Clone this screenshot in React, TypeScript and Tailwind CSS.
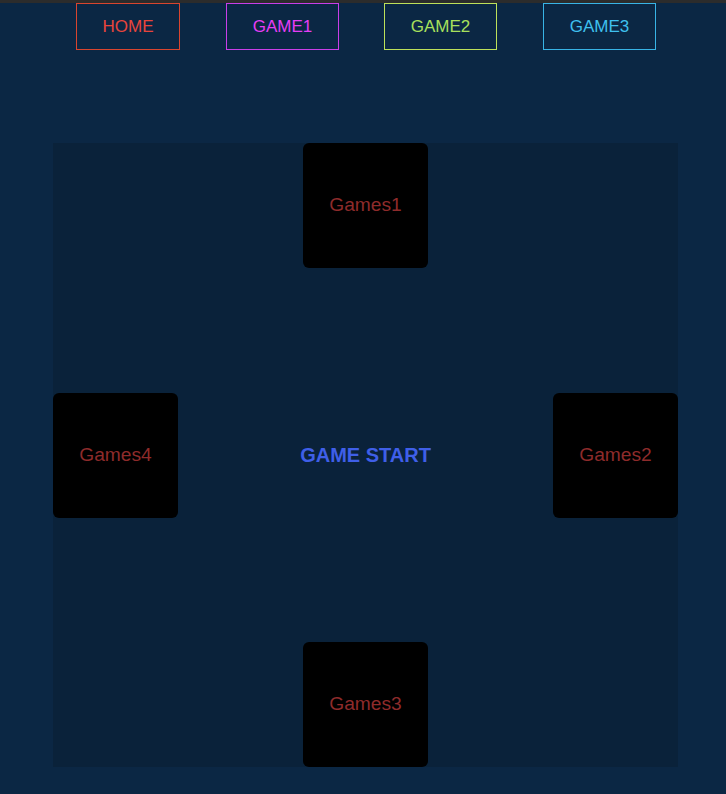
const links = [
  { label: "HOME", w: "w-[104px] ml-[76px]", text: "text-[#e8453c]", border: "border-[#d9452f]" },
  { label: "GAME1", w: "w-[113px] ml-[46px]", text: "text-[#e53df5]", border: "border-[#c93ee8]" },
  { label: "GAME2", w: "w-[113px] ml-[45px]", text: "text-[#a8e05c]", border: "border-[#bde05a]" },
  { label: "GAME3", w: "w-[113px] ml-[46px]", text: "text-[#3fc0ee]", border: "border-[#38b4e6]" },
];

function Card({ name }: { name: string }) {
  return (
    <div className="w-[125px] h-[125px] bg-black rounded-md flex items-center justify-center">
      <span className="text-[19.2px] text-[#8e2b2b]">{name}</span>
    </div>
  );
}

export default function App() {
  return (
    <div
      className="w-[726px] h-[794px] bg-[#0b2744] border-t-[3px] border-[#2c2c2c] overflow-hidden"
      style={{ fontFamily: '"Liberation Sans", Arial, sans-serif' }}
    >
      <nav className="flex">
        {links.map((l) => (
          <a
            key={l.label}
            className={`${l.w} h-[47px] border ${l.border} ${l.text} flex items-center justify-center text-[17px]`}
          >
            {l.label}
          </a>
        ))}
      </nav>

      <div className="ml-[53px] mt-[93px] w-[625px] h-[624px] bg-[#0a223a] grid grid-cols-5 grid-rows-5">
        <div className="col-start-3 row-start-1">
          <Card name="Games1" />
        </div>
        <div className="col-start-1 row-start-3">
          <Card name="Games4" />
        </div>
        <div className="col-start-2 col-span-3 row-start-3 flex items-center justify-center">
          <span className="text-[20px] font-bold text-[#3f5fe8]">GAME START</span>
        </div>
        <div className="col-start-5 row-start-3">
          <Card name="Games2" />
        </div>
        <div className="col-start-3 row-start-5">
          <Card name="Games3" />
        </div>
      </div>
    </div>
  );
}
